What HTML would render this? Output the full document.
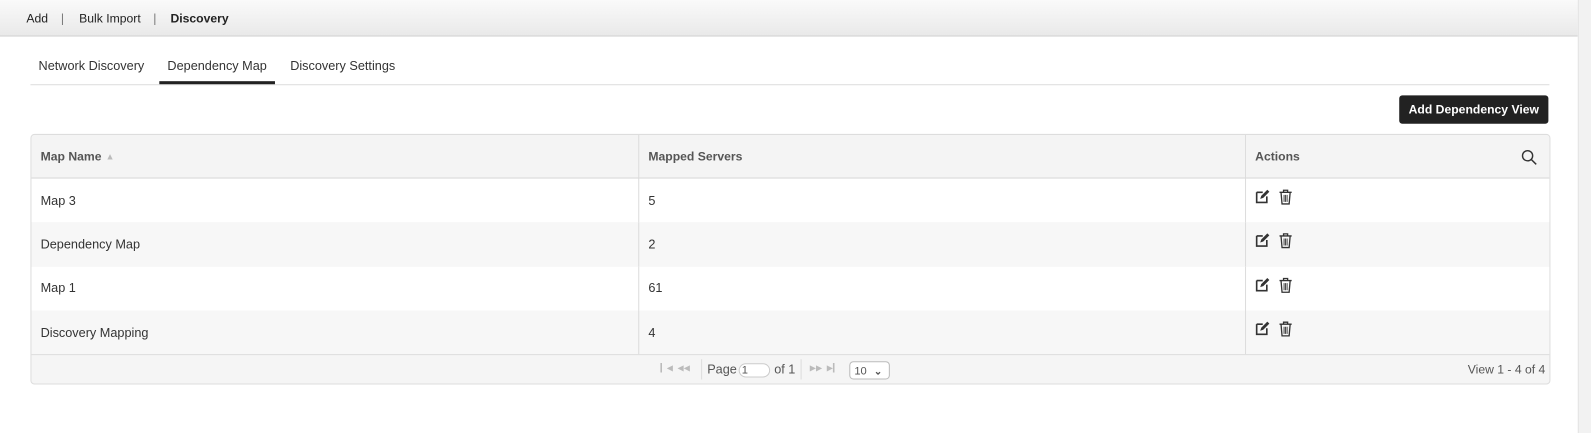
<!DOCTYPE html>
<html><head><style>
*{box-sizing:border-box;margin:0;padding:0}
body{width:1591px;height:433px;background:#fff;font-family:"Liberation Sans",sans-serif;color:#333;position:relative;overflow:hidden}
#w{position:absolute;left:0;top:0;width:1568px;height:427px;transform:scale(1.01467);transform-origin:0 0}
.top{position:absolute;left:0;top:0;width:1555px;height:36px;background:linear-gradient(#fafafa,#e9e9e9);border-bottom:1px solid #d0d0d0;font-size:12px;color:#222}
.top span{position:absolute;top:11px}
.sb{position:absolute;right:0;top:0;width:13px;height:427px;background:#f2f2f2;border-left:1px solid #e4e4e4}
.tabs{position:absolute;left:30px;top:83px;width:1497px;border-top:1px solid #ddd}
.tab{position:absolute;top:58px;font-size:12.5px;color:#333}
.ul{position:absolute;left:157px;top:80px;width:114px;height:3px;background:#222}
.btn{position:absolute;left:1379px;top:94px;width:147px;height:28px;background:#222;border-radius:3px;color:#fff;font-size:12px;font-weight:bold;text-align:center;line-height:28px}
.tbl{position:absolute;left:30px;top:132px;width:1498px;height:247px;border:1px solid #ddd;border-radius:4px;background:#f5f5f5;overflow:hidden}
.row{position:absolute;left:0;width:1496px;font-size:12.5px}
.row div{position:absolute;top:0;height:100%;padding-left:9px;display:flex;align-items:center}
.c1{left:0;width:598px}.c2{left:598px;width:598px;border-left:1px solid #ddd}.c3{left:1196px;width:300px;border-left:1px solid #ddd}
.hd{top:0;height:43px;background:#f4f4f4;border-bottom:1px solid #d5d5d5;font-weight:bold;color:#555;font-size:12px}
.ft{position:absolute;left:0;top:216px;width:1496px;height:30px;border-top:1px solid #ddd;font-size:12.5px;color:#555}
</style></head><body><div id="w">
<div class="top"><span style="left:26px">Add</span><span style="left:60px;color:#777">|</span><span style="left:78px">Bulk Import</span><span style="left:151px;color:#777">|</span><span style="left:168px;font-weight:bold">Discovery</span></div>
<div class="sb"></div>
<div class="tab" style="left:38px">Network Discovery</div>
<div class="tab" style="left:165px">Dependency Map</div>
<div class="tab" style="left:286px">Discovery Settings</div>
<div class="tabs"></div><div class="ul"></div>
<div class="btn">Add Dependency View</div>
<div class="tbl">
<div class="row hd"><div class="c1">Map Name <span style="color:#bbb;font-size:9px;margin-left:4px">&#9650;</span></div><div class="c2">Mapped Servers</div><div class="c3">Actions<svg style="position:absolute;right:12px;top:14px" width="16" height="16" viewBox="0 0 16 16"><circle cx="6.5" cy="6.5" r="5" fill="none" stroke="#333" stroke-width="1.4"/><path d="M10.3 10.3L15 15" stroke="#333" stroke-width="1.5"/></svg></div></div>
<script>
var d=[["Map 3","5","#fff"],["Dependency Map","2","#f7f7f7"],["Map 1","61","#fff"],["Discovery Mapping","4","#f7f7f7"]];
var ic='<svg width="15" height="15" viewBox="0 0 15 15"><path d="M1.5 3.5h6M1.5 3.5v10h10v-6" fill="none" stroke="#333" stroke-width="1.6"/><path d="M5 10l1-3 6-6 2 2-6 6z" fill="#333"/></svg><svg style="margin-left:8px" width="14" height="16" viewBox="0 0 14 16"><path d="M1 3.5h12M5 3.5V1.5h4v2M2.5 3.5l1 11.5h7l1-11.5" fill="none" stroke="#333" stroke-width="1.3"/><path d="M5.5 6v7M7 6v7M8.5 6v7" stroke="#333" stroke-width="0.9"/></svg>';
d.forEach(function(r,i){document.write('<div class="row" style="top:'+(43+i*43.3)+'px;height:43.3px;background:'+r[2]+'"><div class="c1">'+r[0]+'</div><div class="c2">'+r[1]+'</div><div class="c3" style="align-items:flex-start;padding-top:10px">'+ic+'</div></div>');});
</script>
<div class="ft">
<span style="position:absolute;left:620px;top:8px;color:#bbb;font-size:8px">&#9614;&#9664; &nbsp;&#9664;&#9664;</span>
<span style="position:absolute;left:660px;top:4px;height:20px;border-left:1px solid #ddd"></span>
<span style="position:absolute;left:666px;top:7px">Page</span>
<span style="position:absolute;left:697px;top:8px;width:31px;height:14px;border:1px solid #ccc;border-radius:7px;background:#fff;font-size:11px;padding-left:2px;line-height:12px">1</span>
<span style="position:absolute;left:732px;top:7px">of 1</span>
<span style="position:absolute;left:758px;top:4px;height:20px;border-left:1px solid #ddd"></span>
<span style="position:absolute;left:767px;top:8px;color:#bbb;font-size:8px">&#9654;&#9654; &nbsp;&#9654;&#9614;</span>
<span style="position:absolute;left:806px;top:6px;width:40px;height:18px;border:1px solid #bbb;border-radius:4px;background:#fff;font-size:11px;padding:3px 0 0 4px">10 <b style="font-size:10px;margin-left:4px">&#8964;</b></span>
<span style="position:absolute;right:4px;top:7px;font-size:12px">View 1 - 4 of 4</span>
</div>
</div>
</div></body></html>
